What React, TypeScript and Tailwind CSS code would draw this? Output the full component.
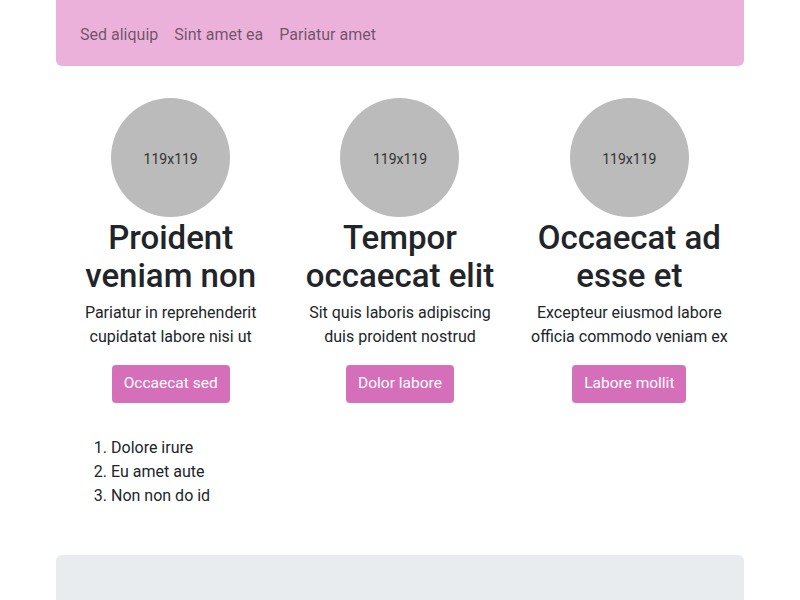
import React from "react";

const cols = [
  {
    title: ["Proident", "veniam non"],
    text: ["Pariatur in reprehenderit", "cupidatat labore nisi ut"],
    btn: "Occaecat sed",
  },
  {
    title: ["Tempor", "occaecat elit"],
    text: ["Sit quis laboris adipiscing", "duis proident nostrud"],
    btn: "Dolor labore",
  },
  {
    title: ["Occaecat ad", "esse et"],
    text: ["Excepteur eiusmod labore", "officia commodo veniam ex"],
    btn: "Labore mollit",
  },
];

export default function App() {
  return (
    <div
      className="w-[800px] h-[600px] overflow-hidden bg-white text-[#212529]"
      style={{ fontFamily: "Roboto, 'Liberation Sans', sans-serif" }}
    >
      <div className="mx-[56px] w-[688px]">
        <nav className="h-[66px] bg-[#ecb1db] rounded-b-[6px] flex items-center px-[16px] pt-[4px]">
          {["Sed aliquip", "Sint amet ea", "Pariatur amet"].map((t) => (
            <span key={t} className="px-[8px] text-[16px] leading-[24px] text-[#000000]/55">
              {t}
            </span>
          ))}
        </nav>
        <div className="grid grid-cols-3 mt-[32px]">
          {cols.map((c, i) => (
            <div key={i} className="flex flex-col items-center text-center px-[12px]">
              <div className="w-[119px] h-[119px] rounded-full bg-[#bbbbbb] flex items-center justify-center text-[14px] text-[#333333] pt-[3px]">
                119x119
              </div>
              <h2 className="mt-[2px] text-[33px] leading-[38px] font-medium text-[#212529]">
                {c.title[0]}
                <br />
                {c.title[1]}
              </h2>
              <p className="mt-[6px] text-[16px] leading-[24px] text-[#212529]">
                {c.text[0]}
                <br />
                {c.text[1]}
              </p>
              <button className="mt-[16px] h-[38px] px-[12px] rounded-[4px] bg-[#d66fba] text-white text-[15.5px]">
                {c.btn}
              </button>
            </div>
          ))}
        </div>
        <ol className="mt-[33px] ml-[23px] pl-[32px] list-decimal text-[16px] leading-[24px]">
          <li>Dolore irure</li>
          <li>Eu amet aute</li>
          <li>Non non do id</li>
        </ol>
        <div className="mt-[47px] h-[60px] bg-[#e9ecef] rounded-t-[6px]" />
      </div>
    </div>
  );
}
